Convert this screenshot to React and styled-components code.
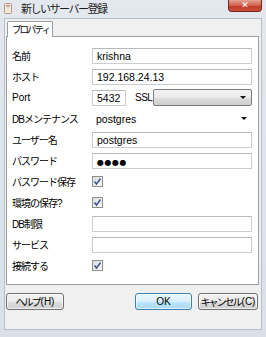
import React from 'react';
import styled, { createGlobalStyle } from 'styled-components';

const GlobalStyle = createGlobalStyle`
  html, body {
    margin: 0;
    padding: 0;
    background: #dfe5ec;
  }
  * { box-sizing: border-box; }
`;

const Window = styled.div`
  width: 266px;
  height: 337px;
  display: flex;
  flex-direction: column;
  background: linear-gradient(#e3e8ee, #d9e0e8);
  font-family: "Liberation Sans", "Noto Sans CJK JP", sans-serif;
  font-size: 10px;
  color: #000;
  overflow: hidden;
`;

const TitleBar = styled.div`
  height: 18px;
  flex: none;
  display: flex;
  align-items: flex-start;
  padding-left: 4px;
`;

const AppIcon = styled.svg`
  margin-top: 3px;
  flex: none;
`;

const Title = styled.div`
  margin-left: 9px;
  margin-top: 2px;
  font-size: 11px;
  letter-spacing: -1.5px;
  color: #1c1c1c;
  line-height: 14px;
`;

const CloseButton = styled.div`
  margin-left: auto;
  margin-right: 4px;
  width: 34px;
  height: 12px;
  border: 1px solid #6e2a22;
  border-top: none;
  border-radius: 0 0 4px 4px;
  background: linear-gradient(#e6a293, #d0604b 50%, #bf3b28 51%, #c9503a);
  display: flex;
  align-items: center;
  justify-content: center;
  color: #fff;
  font-family: "DejaVu Sans", sans-serif;
  font-weight: bold;
  font-size: 9px;
  line-height: 1;
`;

const Client = styled.div`
  flex: none;
  height: 312px;
  margin: 0 4px;
  border: 1px solid #b7c0ca;
  background: #f0f0f0;
  display: flex;
  flex-direction: column;
  padding: 2px 2px 0 1px;
`;

const TabStrip = styled.div`
  display: flex;
  height: 16px;
  padding-left: 1px;
  position: relative;
  z-index: 1;
`;

const Tab = styled.div`
  width: 46px;
  height: 16px;
  background: #fff;
  border: 1px solid #9a9da3;
  border-bottom: none;
  border-radius: 2px 2px 0 0;
  font-size: 9.5px;
  letter-spacing: -2px;
  white-space: nowrap;
  padding: 2px 0 0 4px;
  line-height: 12px;
`;

const Panel = styled.div`
  height: 249px;
  margin-top: -1px;
  background: #fff;
  border: 1px solid #9a9da3;
  padding: 8px 6px 0 5px;
  display: flex;
  flex-direction: column;
`;

const Row = styled.div`
  height: 21px;
  display: flex;
  align-items: center;
`;

const Label = styled.div`
  width: 80px;
  flex: none;
  letter-spacing: ${(p) => (p.$latin ? '0' : '-1px')};
  white-space: nowrap;
`;

const TextBox = styled.div`
  width: ${(p) => p.$w || 160}px;
  height: 16px;
  flex: none;
  border: 1px solid #c9ccd2;
  border-top-color: #b5b9c0;
  background: #fff;
  padding-left: 4px;
  font-size: 10.5px;
  line-height: 14px;
  white-space: nowrap;
  overflow: hidden;
`;

const Dots = styled.span`
  font-family: "DejaVu Sans", sans-serif;
  font-size: 8px;
  letter-spacing: 0.5px;
`;

const SslLabel = styled.div`
  margin-left: 9px;
  width: 18px;
  flex: none;
  font-size: 10px;
  letter-spacing: -0.5px;
  white-space: nowrap;
`;

const Combo = styled.div`
  width: ${(p) => p.$w}px;
  height: 17px;
  flex: none;
  display: flex;
  align-items: center;
  padding: 0 5px 0 4px;
  font-size: 10.5px;
  ${(p) =>
    p.$styled
      ? `
    border: 1px solid #7a7a7a;
    border-radius: 2px;
    background: linear-gradient(#f3f3f3, #ebebeb 50%, #dcdcdc 51%, #cfcfcf);
  `
      : `
    background: #fff;
  `}
`;

const ComboText = styled.span`
  flex: 1;
`;

const Arrow = styled.span`
  width: 0;
  height: 0;
  border-left: 3px solid transparent;
  border-right: 3px solid transparent;
  border-top: 3px solid #111;
`;

const CheckBox = styled.div`
  width: 11px;
  height: 11px;
  border: 1px solid #8e8f8f;
  background: linear-gradient(135deg, #dcdcdc, #fbfbfb);
  display: flex;
  align-items: center;
  justify-content: center;
`;

const ButtonBar = styled.div`
  display: flex;
  align-items: center;
  margin-top: 8px;
  gap: 6px;
`;

const Button = styled.div`
  width: ${(p) => p.$w}px;
  height: 17px;
  flex: none;
  border: 1px solid ${(p) => (p.$primary ? '#3c7fb1' : '#707070')};
  border-radius: 3px;
  background: ${(p) =>
    p.$primary
      ? 'linear-gradient(#eaf6fd, #d9f0fc 50%, #bee6fd 51%, #a7d9f5)'
      : 'linear-gradient(#f2f2f2, #ebebeb 50%, #dddddd 51%, #cfcfcf)'};
  box-shadow: inset 0 0 0 1px rgba(255, 255, 255, 0.65);
  display: flex;
  align-items: center;
  justify-content: center;
  font-size: 10px;
  white-space: nowrap;
  margin-left: ${(p) => p.$ml || 0}px;
`;

const Kana = styled.span`
  letter-spacing: -2px;
  margin-right: 1px;
`;

const Check = () => (
  <svg width="9" height="9" viewBox="0 0 9 9">
    <path d="M1.5 4.5 L3.5 7 L7.5 1.5" fill="none" stroke="#3b4f8f" strokeWidth="1.4" />
  </svg>
);

const fields = [
  { label: '名前', type: 'text', value: 'krishna' },
  { label: 'ホスト', type: 'text', value: '192.168.24.13' },
  { label: 'Port', type: 'port', latin: true },
  { label: 'DBメンテナンス', type: 'combo', value: 'postgres' },
  { label: 'ユーザー名', type: 'text', value: 'postgres' },
  { label: 'パスワード', type: 'password' },
  { label: 'パスワード保存', type: 'check' },
  { label: '環境の保存?', type: 'check' },
  { label: 'DB制限', type: 'text', value: '' },
  { label: 'サービス', type: 'text', value: '' },
  { label: '接続する', type: 'check' },
];

const Field = ({ f }) => {
  if (f.type === 'port') {
    return (
      <>
        <TextBox $w={34}>5432</TextBox>
        <SslLabel>SSL</SslLabel>
        <Combo $w={99} $styled>
          <ComboText />
          <Arrow />
        </Combo>
      </>
    );
  }
  if (f.type === 'combo') {
    return (
      <Combo $w={160}>
        <ComboText>{f.value}</ComboText>
        <Arrow />
      </Combo>
    );
  }
  if (f.type === 'password') {
    return (
      <TextBox>
        <Dots>●●●●</Dots>
      </TextBox>
    );
  }
  if (f.type === 'check') {
    return (
      <CheckBox>
        <Check />
      </CheckBox>
    );
  }
  return <TextBox>{f.value}</TextBox>;
};

export default function App() {
  return (
    <>
      <GlobalStyle />
      <Window>
        <TitleBar>
          <AppIcon width="8" height="11" viewBox="0 0 8 11">
            <rect x="0.5" y="0.5" width="7" height="10" rx="1" fill="#efe6dc" stroke="#b89a86" />
            <rect x="2" y="2" width="4" height="2" fill="#c9a894" />
          </AppIcon>
          <Title>新しいサーバー登録</Title>
          <CloseButton>✕</CloseButton>
        </TitleBar>
        <Client>
          <TabStrip>
            <Tab>プロパティ</Tab>
          </TabStrip>
          <Panel>
            {fields.map((f) => (
              <Row key={f.label}>
                <Label $latin={f.latin}>{f.label}</Label>
                <Field f={f} />
              </Row>
            ))}
          </Panel>
          <ButtonBar>
            <Button $w={58}><Kana>ヘルプ</Kana>(H)</Button>
            <Button $w={57} $primary $ml={65}>OK</Button>
            <Button $w={60}><Kana>キャンセル</Kana>(C)</Button>
          </ButtonBar>
        </Client>
      </Window>
    </>
  );
}
